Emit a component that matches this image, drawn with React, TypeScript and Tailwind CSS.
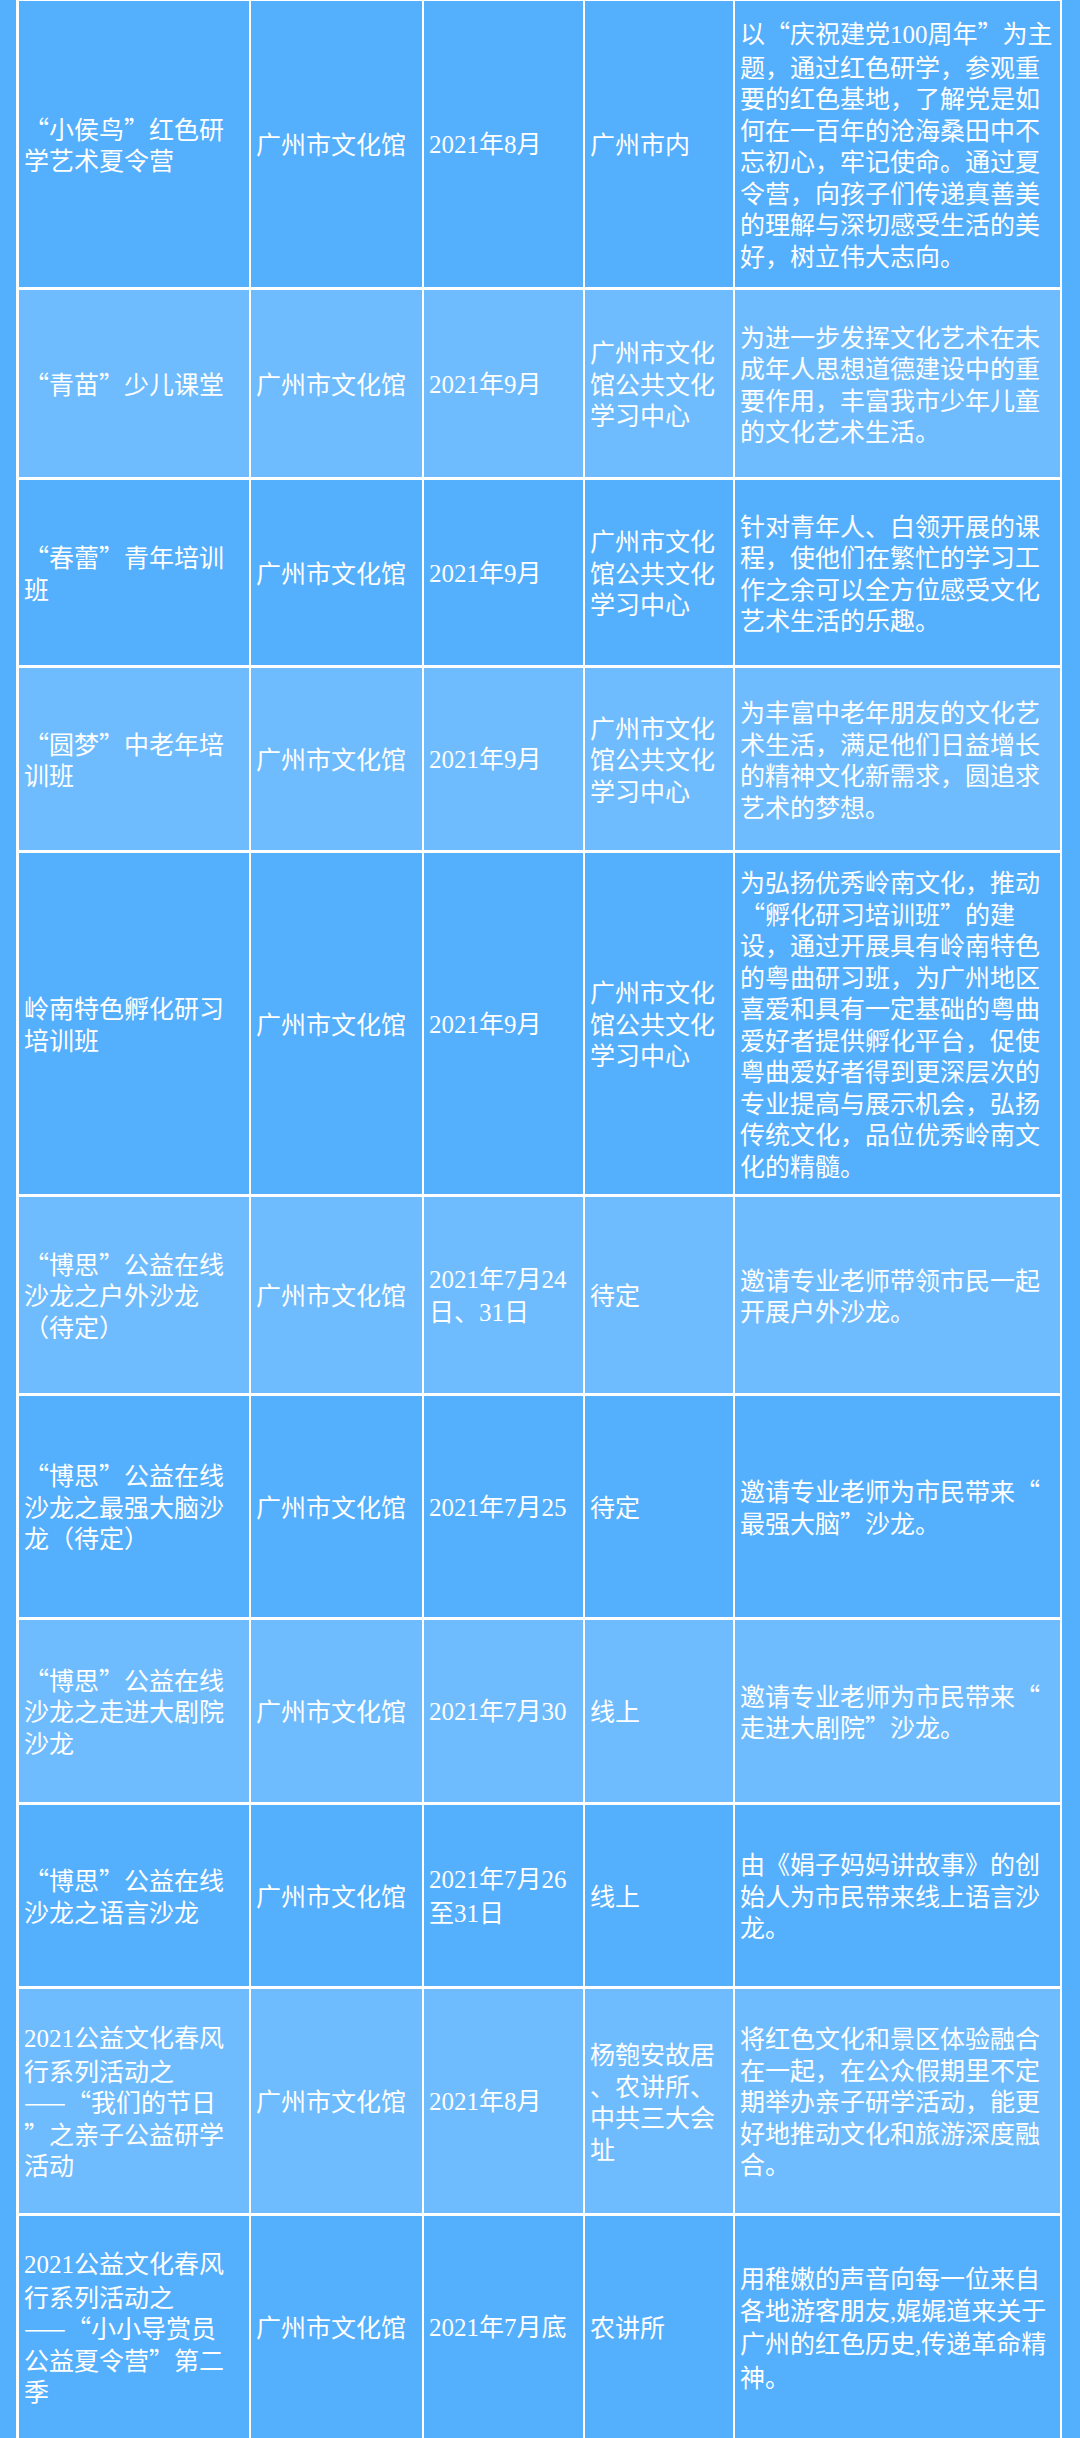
import React from "react";

type Row = {
  h: number;
  light: boolean;
  name: string[];
  org: string[];
  date: string[];
  place: string[];
  desc: string[];
};

const ORG = ["广州市文化馆"];
const CENTER = ["广州市文化", "馆公共文化", "学习中心"];

const ROWS: Row[] = [
  {
    h: 286,
    light: false,
    name: ["“小侯鸟”红色研", "学艺术夏令营"],
    org: ORG,
    date: ["2021年8月"],
    place: ["广州市内"],
    desc: [
      "以“庆祝建党100周年”为主",
      "题，通过红色研学，参观重",
      "要的红色基地，了解党是如",
      "何在一百年的沧海桑田中不",
      "忘初心，牢记使命。通过夏",
      "令营，向孩子们传递真善美",
      "的理解与深切感受生活的美",
      "好，树立伟大志向。",
    ],
  },
  {
    h: 187,
    light: true,
    name: ["“青苗”少儿课堂"],
    org: ORG,
    date: ["2021年9月"],
    place: CENTER,
    desc: [
      "为进一步发挥文化艺术在未",
      "成年人思想道德建设中的重",
      "要作用，丰富我市少年儿童",
      "的文化艺术生活。",
    ],
  },
  {
    h: 185,
    light: false,
    name: ["“春蕾”青年培训", "班"],
    org: ORG,
    date: ["2021年9月"],
    place: CENTER,
    desc: [
      "针对青年人、白领开展的课",
      "程，使他们在繁忙的学习工",
      "作之余可以全方位感受文化",
      "艺术生活的乐趣。",
    ],
  },
  {
    h: 182,
    light: true,
    name: ["“圆梦”中老年培", "训班"],
    org: ORG,
    date: ["2021年9月"],
    place: CENTER,
    desc: [
      "为丰富中老年朋友的文化艺",
      "术生活，满足他们日益增长",
      "的精神文化新需求，圆追求",
      "艺术的梦想。",
    ],
  },
  {
    h: 341,
    light: false,
    name: ["岭南特色孵化研习", "培训班"],
    org: ORG,
    date: ["2021年9月"],
    place: CENTER,
    desc: [
      "为弘扬优秀岭南文化，推动",
      "“孵化研习培训班”的建",
      "设，通过开展具有岭南特色",
      "的粤曲研习班，为广州地区",
      "喜爱和具有一定基础的粤曲",
      "爱好者提供孵化平台，促使",
      "粤曲爱好者得到更深层次的",
      "专业提高与展示机会，弘扬",
      "传统文化，品位优秀岭南文",
      "化的精髓。",
    ],
  },
  {
    h: 196,
    light: true,
    name: ["“博思”公益在线", "沙龙之户外沙龙", "（待定）"],
    org: ORG,
    date: ["2021年7月24", "日、31日"],
    place: ["待定"],
    desc: ["邀请专业老师带领市民一起", "开展户外沙龙。"],
  },
  {
    h: 221,
    light: false,
    name: ["“博思”公益在线", "沙龙之最强大脑沙", "龙（待定）"],
    org: ORG,
    date: ["2021年7月25"],
    place: ["待定"],
    desc: ["邀请专业老师为市民带来“", "最强大脑”沙龙。"],
  },
  {
    h: 182,
    light: true,
    name: ["“博思”公益在线", "沙龙之走进大剧院", "沙龙"],
    org: ORG,
    date: ["2021年7月30"],
    place: ["线上"],
    desc: ["邀请专业老师为市民带来“", "走进大剧院”沙龙。"],
  },
  {
    h: 181,
    light: false,
    name: ["“博思”公益在线", "沙龙之语言沙龙"],
    org: ORG,
    date: ["2021年7月26", "至31日"],
    place: ["线上"],
    desc: ["由《娟子妈妈讲故事》的创", "始人为市民带来线上语言沙", "龙。"],
  },
  {
    h: 224,
    light: true,
    name: ["2021公益文化春风", "行系列活动之", "——“我们的节日", "”之亲子公益研学", "活动"],
    org: ORG,
    date: ["2021年8月"],
    place: ["杨匏安故居", "、农讲所、", "中共三大会", "址"],
    desc: [
      "将红色文化和景区体验融合",
      "在一起，在公众假期里不定",
      "期举办亲子研学活动，能更",
      "好地推动文化和旅游深度融",
      "合。",
    ],
  },
  {
    h: 222,
    light: false,
    name: ["2021公益文化春风", "行系列活动之", "——“小小导赏员", "公益夏令营”第二", "季"],
    org: ORG,
    date: ["2021年7月底"],
    place: ["农讲所"],
    desc: [
      "用稚嫩的声音向每一位来自",
      "各地游客朋友,娓娓道来关于",
      "广州的红色历史,传递革命精",
      "神。",
    ],
  },
];

// digits and latin punctuation use the serif face, the rest the CJK face
function Line({ text }: { text: string }) {
  const parts = text.split(/([0-9A-Za-z,]+)/);
  return (
    <div className="whitespace-nowrap">
      {parts.map((p, i) =>
        /^[0-9A-Za-z,]+$/.test(p) ? (
          <span key={i} className="font-['Liberation_Serif',serif]">
            {p}
          </span>
        ) : (
          <span key={i}>{p}</span>
        )
      )}
    </div>
  );
}

function Cell({ lines, light }: { lines: string[]; light: boolean }) {
  return (
    <div
      className={`flex flex-col justify-center overflow-hidden pl-[5px] ${
        light ? "bg-[#6ebcfe]" : "bg-[#54affd]"
      }`}
    >
      {lines.map((l, i) => (
        <Line key={i} text={l} />
      ))}
    </div>
  );
}

export default function App() {
  return (
    <div className="h-[2438px] w-[1080px] overflow-hidden bg-[#54affd] pl-[16px] pr-[18px] font-['Noto_Sans_CJK_SC',sans-serif] text-[25px] leading-[31.5px] text-white">
      <div className="flex h-full flex-col gap-[3px] bg-white pl-[3px] pr-[2px] pt-px">
        {ROWS.map((r, i) => (
          <div
            key={i}
            className="grid shrink-0 grid-cols-[230px_171px_159px_148px_325px] gap-x-[2px]"
            style={{ height: r.h }}
          >
            <Cell lines={r.name} light={r.light} />
            <Cell lines={r.org} light={r.light} />
            <Cell lines={r.date} light={r.light} />
            <Cell lines={r.place} light={r.light} />
            <Cell lines={r.desc} light={r.light} />
          </div>
        ))}
      </div>
    </div>
  );
}
